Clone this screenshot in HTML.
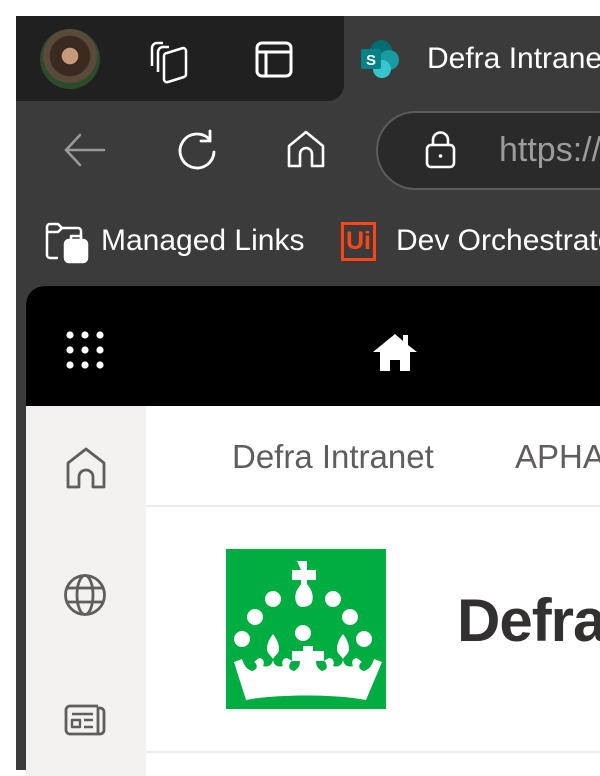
<!DOCTYPE html>
<html><head><style>
*{margin:0;padding:0;box-sizing:border-box}
body{width:600px;height:770px;background:#fff;position:relative;overflow:hidden;font-family:"Liberation Sans","DejaVu Sans",sans-serif}
.a{position:absolute}
</style></head><body>
<div class="a" style="left:16px;top:16px;width:584px;height:754px;background:#3b3b3b"></div>
<div class="a" style="left:16px;top:16px;width:328px;height:85px;background:#202020;border-bottom-right-radius:16px"></div>
<div class="a" style="left:344px;top:16px;width:256px;height:90px;background:#3b3b3b;border-top-left-radius:16px"></div>
<div class="a" style="left:40px;top:29px;width:60px;height:60px;border-radius:50%;background:radial-gradient(circle at 50% 45%,#c89a7a 0 18%,#3a2a22 19% 45%,#5a4a3a 46% 60%,#2d4a2a 61%)"></div>
<svg class="a" style="left:146px;top:36px" width="50" height="50" viewBox="0 0 50 50" fill="none" stroke="#fff" stroke-width="2.5" stroke-linejoin="round"><path d="M6 30 V12 a5 5 0 0 1 5 -5 h6"/><path d="M12 36 V16 a5 5 0 0 1 5 -5 h6"/><path d="M18 20 a3 3 0 0 1 3 -3 L37 12 a3 3 0 0 1 3 3 V38 a3 3 0 0 1 -2 3 L22 46 a3 3 0 0 1 -4 -3 Z"/></svg>
<svg class="a" style="left:255px;top:41px" width="40" height="38" viewBox="0 0 40 38" fill="none" stroke="#fff" stroke-width="3"><rect x="2" y="2" width="34" height="33" rx="5"/><path d="M2 11 H36 M11 11 V35"/></svg>
<svg class="a" style="left:360px;top:38px" width="42" height="42" viewBox="0 0 42 42"><circle cx="21" cy="13" r="11" fill="#036c70"/><circle cx="29" cy="22" r="10" fill="#1a9ba1"/><circle cx="22" cy="31" r="9" fill="#37c6d0"/><rect x="1" y="11" width="20" height="20" rx="2" fill="#038387"/><text x="11" y="27" font-size="15" font-weight="bold" fill="#fff" text-anchor="middle" font-family="Liberation Sans">S</text></svg>
<div class="a" style="left:427px;top:42px;color:#fff;font-size:30px;white-space:nowrap">Defra Intranet</div>
<svg class="a" style="left:60px;top:130px" width="50" height="40" viewBox="0 0 50 40" fill="none" stroke="#9a9a9a" stroke-width="2.5" stroke-linecap="round"><path d="M6 20 H44 M20 5 L6 20 L20 35"/></svg>
<svg class="a" style="left:172px;top:128px" width="50" height="46" viewBox="0 0 50 46" fill="none" stroke="#fff" stroke-width="2.8" stroke-linecap="round"><path d="M38 12 A17 17 0 1 0 42 24"/><path d="M38 3 V13 H29"/></svg>
<svg class="a" style="left:284px;top:128px" width="44" height="44" viewBox="0 0 44 44" fill="none" stroke="#fff" stroke-width="2.6" stroke-linejoin="round"><path d="M5 38 V18 L22 4 L39 18 V38 H28 V26 a6 6 0 0 0 -12 0 V38 Z"/></svg>
<div class="a" style="left:376px;top:111px;width:260px;height:79px;border:2px solid #5c5c5c;border-radius:40px;background:#2a2a2a"></div>
<svg class="a" style="left:424px;top:130px" width="34" height="40" viewBox="0 0 34 40" fill="none" stroke="#fff" stroke-width="2.6"><rect x="3" y="15" width="27" height="22" rx="4"/><path d="M9 15 V10 a7.5 7.5 0 0 1 15 0 V15"/><circle cx="16.5" cy="26" r="1.8" fill="#fff" stroke="none"/></svg>
<div class="a" style="left:499px;top:131px;color:#9c9c9c;font-size:34px;white-space:nowrap">https://</div>
<svg class="a" style="left:44px;top:222px" width="48" height="44" viewBox="0 0 48 44" fill="none" stroke="#fff" stroke-width="2.5" stroke-linejoin="round"><path d="M14 36 H6 a3 3 0 0 1 -3 -3 V5 a3 3 0 0 1 3 -3 h8 l4 4 h16 a3 3 0 0 1 3 3 V16"/><path d="M3 10 H14 L18 6"/><rect x="21" y="18" width="22" height="22" rx="4" fill="#fff"/><path d="M27 18 V14 H37 V18"/></svg>
<div class="a" style="left:101px;top:224px;color:#fff;font-size:30px;white-space:nowrap">Managed Links</div>
<div class="a" style="left:341px;top:222px;width:35px;height:39px;border:3px solid #fa4616;color:#fa4616;font-size:25px;font-weight:bold;line-height:32px;text-align:center">Ui</div>
<div class="a" style="left:396px;top:224px;color:#fff;font-size:30px;white-space:nowrap">Dev Orchestrator</div>
<div class="a" style="left:26px;top:286px;width:580px;height:490px;background:#fff;border-top-left-radius:18px;overflow:hidden">
  <div class="a" style="left:0;top:0;width:600px;height:120px;background:#000"></div>
  <svg class="a" style="left:38px;top:44px" width="42" height="42" viewBox="0 0 42 42" fill="#fff"><circle cx="6" cy="5" r="3.6"/><circle cx="21" cy="5" r="3.6"/><circle cx="36" cy="5" r="3.6"/><circle cx="6" cy="20" r="3.6"/><circle cx="21" cy="20" r="3.6"/><circle cx="36" cy="20" r="3.6"/><circle cx="6" cy="35" r="3.6"/><circle cx="21" cy="35" r="3.6"/><circle cx="36" cy="35" r="3.6"/></svg>
  <svg class="a" style="left:346px;top:46px" width="46" height="40" viewBox="0 0 46 40" fill="#fff"><path d="M1 20 L23 2 L31 9 V3 H36 V13 L45 20 H38 V39 H28 V28 H18 V39 H8 V20 Z"/></svg>
  <div class="a" style="left:0;top:120px;width:120px;height:400px;background:#f3f2f1"></div>
  <svg class="a" style="left:38px;top:160px" width="44" height="46" viewBox="0 0 44 46" fill="none" stroke="#605e5c" stroke-width="2.8" stroke-linejoin="round"><path d="M4 41 V17 L22 3 L40 17 V41 H29 V31 a7 7 0 0 0 -14 0 V41 Z"/></svg>
  <svg class="a" style="left:36px;top:286px" width="46" height="46" viewBox="0 0 46 46" fill="none" stroke="#605e5c" stroke-width="2.8"><circle cx="23" cy="23" r="19.5"/><ellipse cx="23" cy="23" rx="8" ry="19.5"/><path d="M4 16 H42 M4 30 H42"/></svg>
  <svg class="a" style="left:36px;top:410px" width="46" height="42" viewBox="0 0 46 42" fill="none" stroke="#605e5c" stroke-width="2.8" stroke-linejoin="round"><path d="M36 10 H8 a4 4 0 0 0 -4 4 V34 a4 4 0 0 0 4 4 H38 a4 4 0 0 0 4 -4 V16 a4 4 0 0 0 -4 -4 h-2 V38"/><rect x="10" y="24" width="8" height="7" stroke-width="2.4"/><path d="M22 24 H31 M22 31 H31 M10 18 H31" stroke-width="2.4"/></svg>
  <div class="a" style="left:120px;top:219px;width:480px;height:2px;background:#edebe9"></div>
  <div class="a" style="left:120px;top:465px;width:480px;height:2px;background:#edebe9"></div>
  <div class="a" style="left:206px;top:152px;color:#605e5c;font-size:33px;white-space:nowrap">Defra Intranet</div>
  <div class="a" style="left:489px;top:152px;color:#605e5c;font-size:33px;white-space:nowrap">APHA</div>
  <div class="a" style="left:200px;top:263px;width:160px;height:160px;background:#00ad40"></div>
  <svg class="a" style="left:200px;top:263px" width="160" height="160" viewBox="0 0 160 160" fill="#fff">
    <path d="M71 12 h10 v9 h9 v10 h-9 v4 c5 6 7 12 5 18 c-2 5 -10 6 -13 4 c-4 -3 -5 -10 -2 -16 l4 -6 v-4 h-9 v-10 h9 z"/>
    <circle cx="47" cy="50" r="8"/><circle cx="107" cy="50" r="8"/>
    <circle cx="29" cy="68" r="8"/><circle cx="124" cy="68" r="8"/>
    <circle cx="16" cy="90" r="8"/><circle cx="138" cy="90" r="8"/>
    <circle cx="77" cy="84" r="8"/>
    <path d="M8 113 l8 -3 c2 6 4 10 10 12 c6 -1 6 -7 2 -9 l5 -4 c4 0 6 4 4 8 c6 2 10 -2 10 -7 c-2 -4 -6 -5 -6 -10 c0 -6 3 -11 6 -15 c3 4 6 9 6 15 c0 5 -4 6 -6 10 c0 5 4 9 10 7 c-2 -4 0 -8 4 -8 l5 3 c-4 3 -4 9 2 10 c4 -2 6 -5 6 -10 h-8 v-10 h11 v-5 h10 v5 h11 v10 h-8 c0 5 2 8 6 10 c6 -1 6 -7 2 -10 l5 -3 c4 0 6 4 4 8 c6 2 10 -2 10 -7 c-2 -4 -6 -5 -6 -10 c0 -6 3 -11 6 -15 c3 4 6 9 6 15 c0 5 -4 6 -6 10 c0 5 4 9 10 7 c-2 -4 0 -8 4 -8 l5 4 c-4 2 -4 8 2 9 c6 -2 8 -6 10 -12 l8 3 l-16 38 c-30 -6 -90 -6 -120 0 z"/>
  </svg>
  <div class="a" style="left:431px;top:300px;color:#323130;font-size:60px;font-weight:bold;white-space:nowrap;letter-spacing:-1px">Defra</div>
</div>
</body></html>
